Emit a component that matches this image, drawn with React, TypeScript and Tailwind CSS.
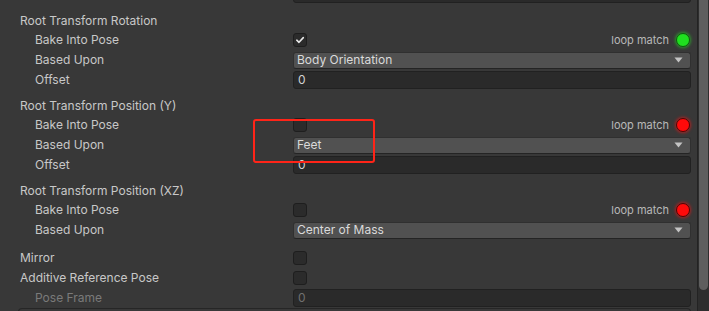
import React from "react";

const font = { fontFamily: "Inter, 'Noto Sans', 'Liberation Sans', sans-serif" };

function Check({ checked }: { checked?: boolean }) {
  return (
    <div className="w-[14px] h-[14px] rounded-[3px] bg-[#2b2b2b] border border-[#1e1e1e] flex items-center justify-center">
      {checked && (
        <svg width="10" height="10" viewBox="0 0 10 10">
          <path d="M1.8 5.2 L4 7.3 L8.3 2.6" fill="none" stroke="#e8e8e8" strokeWidth="1.6" strokeLinecap="round" strokeLinejoin="round" />
        </svg>
      )}
    </div>
  );
}

function Dropdown({ value }: { value: string }) {
  return (
    <div className="flex-1 h-[17px] rounded-[3px] bg-[#515151] border border-[#303030] border-b-[#242424] flex items-center justify-between pl-[3px] pr-[7px] text-[12px] text-[#dadada]">
      <span>{value}</span>
      <svg width="9" height="6" viewBox="0 0 9 6">
        <path d="M0.5 0.5 H8.5 L4.5 5.5 Z" fill="#c4c4c4" />
      </svg>
    </div>
  );
}

function Field({ value, disabled }: { value: string; disabled?: boolean }) {
  return (
    <div
      className={
        "flex-1 h-[18px] rounded-[3px] bg-[#2a2a2a] border border-[#212121] flex items-center pl-[4px] text-[12px] " +
        (disabled ? "text-[#707070]" : "text-[#d2d2d2]")
      }
    >
      {value}
    </div>
  );
}

function Lamp({ color }: { color: "green" | "red" }) {
  return color === "green" ? (
    <div className="w-[14px] h-[14px] rounded-full bg-[#1fe01f] border border-[#0d5a0d] shadow-[0_0_3px_1px_rgba(40,220,40,0.55)]" />
  ) : (
    <div className="w-[14px] h-[14px] rounded-full bg-[#ff0a0a] border border-[#4a0606] shadow-[0_0_3px_1px_rgba(255,20,20,0.55)]" />
  );
}

function Row({
  label,
  indent,
  disabled,
  children,
}: {
  label: string;
  indent?: boolean;
  disabled?: boolean;
  children?: React.ReactNode;
}) {
  return (
    <div className="h-[20px] flex items-center">
      <div
        className={
          "w-[293px] shrink-0 text-[12px] " +
          (indent ? "pl-[35px] " : "pl-[20px] ") +
          (disabled ? "text-[#7a7a7a]" : "text-[#c8c8c8]")
        }
      >
        {label}
      </div>
      <div className="flex-1 flex items-center">{children}</div>
    </div>
  );
}

function Header({ label, className }: { label: string; className?: string }) {
  return (
    <div className={"h-[19px] flex items-center pl-[20px] text-[12px] text-[#c8c8c8] " + (className || "")}>
      {label}
    </div>
  );
}

function BakeRow({ checked, lamp }: { checked?: boolean; lamp: "green" | "red" }) {
  return (
    <Row label="Bake Into Pose" indent>
      <div className="flex-1 flex items-center justify-between">
        <Check checked={checked} />
        <div className="flex items-center gap-[7px] pr-[1px]">
          <span className="text-[11px] text-[#b8b8b8]">loop match</span>
          <Lamp color={lamp} />
        </div>
      </div>
    </Row>
  );
}

export default function App() {
  return (
    <div className="relative w-[709px] h-[311px] overflow-hidden bg-[#383838] flex" style={font}>
      <div className="flex-1 pr-[6px]">
        <div className="-mt-[16px]">
          <Row label="">
            <Field value="" />
          </Row>
        </div>

        <Header label="Root Transform Rotation" className="mt-[7px]" />
        <BakeRow checked lamp="green" />
        <Row label="Based Upon" indent>
          <Dropdown value="Body Orientation" />
        </Row>
        <Row label="Offset" indent>
          <Field value="0" />
        </Row>

        <Header label="Root Transform Position (Y)" className="mt-[6px]" />
        <BakeRow lamp="red" />
        <Row label="Based Upon" indent>
          <Dropdown value="Feet" />
        </Row>
        <Row label="Offset" indent>
          <Field value="0" />
        </Row>

        <Header label="Root Transform Position (XZ)" className="mt-[6px]" />
        <BakeRow lamp="red" />
        <Row label="Based Upon" indent>
          <Dropdown value="Center of Mass" />
        </Row>

        <div className="mt-[8px]">
          <Row label="Mirror">
            <Check />
          </Row>
          <Row label="Additive Reference Pose">
            <Check />
          </Row>
          <Row label="Pose Frame" indent disabled>
            <Field value="0" disabled />
          </Row>
        </div>
        <div className="ml-[18px] h-[10px] rounded-t-[4px] border border-[#262626] border-b-0 bg-[#383838]" />
      </div>

      <div className="w-[12px] shrink-0 bg-[#2e2e2e] border-l border-[#232323] flex justify-center">
        <div className="w-[9px] h-[290px] rounded-b-full bg-[#5e5e5e]" />
      </div>

      <div className="absolute left-[253px] top-[119px] w-[122px] h-[44px] rounded-[3px] border-2 border-[#ff2418] pointer-events-none" />
    </div>
  );
}
